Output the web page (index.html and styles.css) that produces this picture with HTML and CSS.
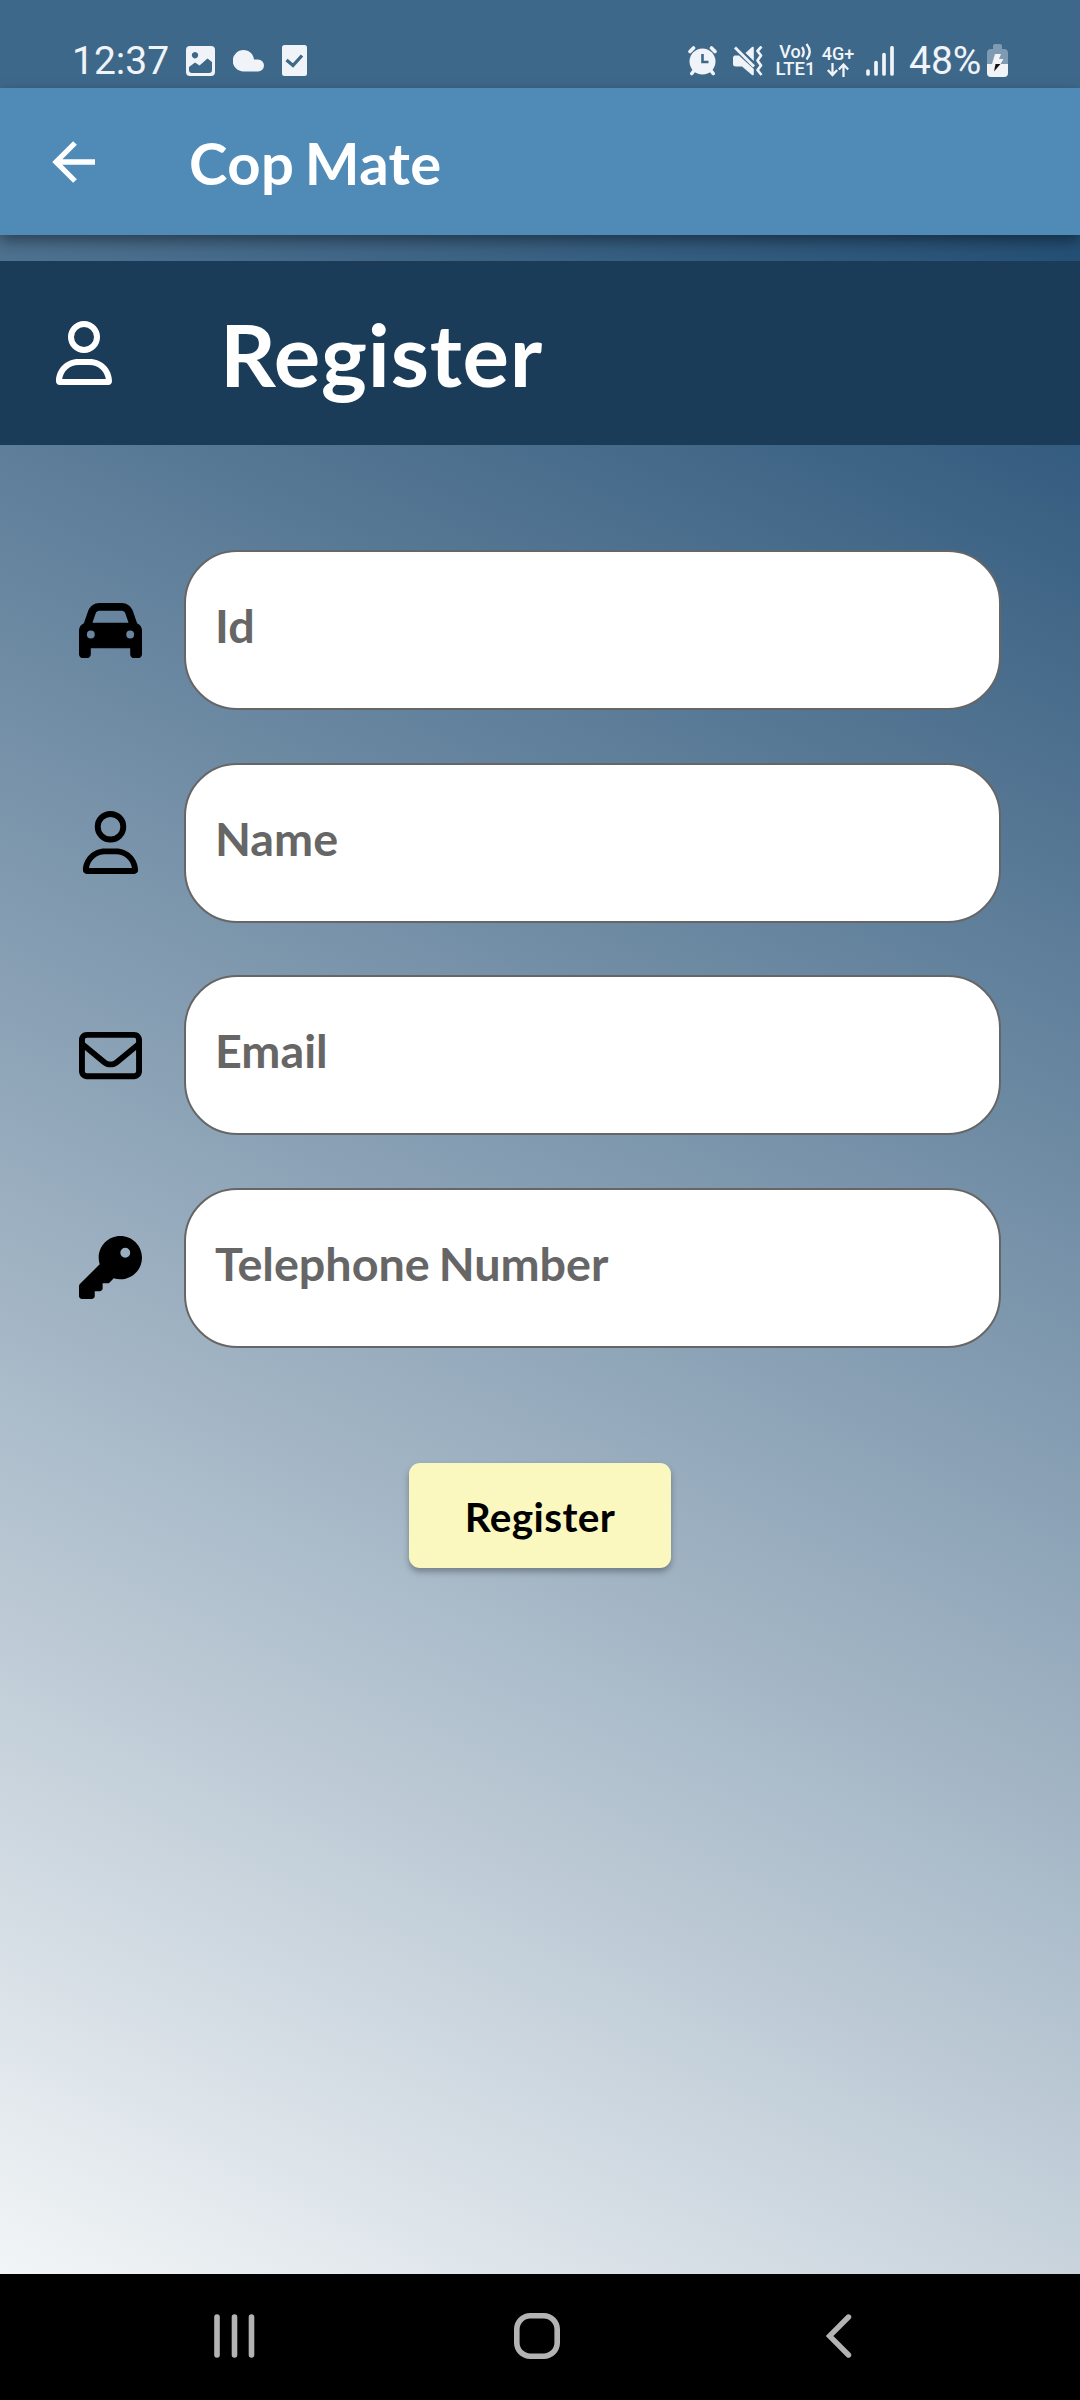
FILE: index.html
```html
<!DOCTYPE html>
<html lang="en">
<head>
<meta charset="utf-8">
<title>Cop Mate</title>
<link rel="stylesheet" href="styles.css">
</head>
<body>
<div class="screen">
  <div class="status-bar">
    <div class="status-left">
      <span class="clock">12:37</span>
      <svg class="photo" width="29" height="30" viewBox="0 0 29 30"><path fill="currentColor" fill-rule="evenodd" d="M4 0H25Q29 0 29 4V26Q29 30 25 30H4Q0 30 0 26V4Q0 0 4 0ZM3 21V24Q3 27 6 27H23Q26 27 26 24V16L21.500 12.500L13.500 19.500L9 16.500ZM9 6A3.200 3.200 0 1 0 9.010 6Z"/></svg>
      <svg class="cloud" width="31" height="22" viewBox="0 0 31 22"><path fill="currentColor" d="M10.500 0C16 0 20.500 4 21 9.500H25A5.900 5.900 0 0 1 25 21.500H10.500A10.700 10.700 0 0 1 10.500 0Z"/></svg>
      <svg class="task" width="25" height="31" viewBox="0 0 25 31"><rect width="25" height="31" rx="2.500" fill="currentColor"/><path d="M4.500 15L11 20.500L20 10.500" fill="none" stroke="#3e688a" stroke-width="3.300"/></svg>
    </div>
    <div class="status-right">
      <svg class="alarm" width="29" height="30" viewBox="0 0 29 30"><g fill="none" stroke="currentColor" stroke-width="3.600" stroke-linecap="round"><path d="M2 5.500L5.500 2M27 5.500L23.500 2M6.500 24L3.800 27.500M22.500 24L25.200 27.500"/></g><circle cx="14.500" cy="15.500" r="13" fill="currentColor"/><path d="M14.500 8V16H20.500" fill="none" stroke="#3e688a" stroke-width="2.600"/></svg>
      <svg class="mute" width="30" height="30" viewBox="0 0 30 30"><path fill="currentColor" d="M12.500 7L19 1Q20.800 0 20.800 2V15ZM1.500 9.500H6L20.800 23V28Q20.800 30 19 29L9 20.500H3Q0 20.500 0 18V11Z"/><path d="M2 1.500L21 20.500" stroke="currentColor" stroke-width="2.800"/><path d="M28.500 .5L24.500 5L28 9.500L24.500 14.500L28 19.500L24.500 24L28.500 29" fill="none" stroke="currentColor" stroke-width="2.700" stroke-linejoin="round"/></svg>
      <div class="volte">
        <span class="vo">Vo<svg width="11" height="18" viewBox="0 0 11 18"><path d="M1 4Q4.500 9 1 14M5.500 1Q12 9 5.500 16.500" fill="none" stroke="currentColor" stroke-width="2.300"/></svg></span>
        <span class="lte">LTE1</span>
      </div>
      <div class="network">
        <span class="gen">4G+</span>
        <svg width="22" height="14" viewBox="0 0 22 14"><path d="M5.500 0V12M.8 7L5.500 12L10.200 7M16.500 14V1.500M11.800 6.500L16.500 1.500L21.200 6.500" fill="none" stroke="currentColor" stroke-width="2.300"/></svg>
      </div>
      <svg class="signal" width="28" height="30" viewBox="0 0 28 30"><path d="M2 25V28M10 16.500V28M18 8.500V28M26 1.800V28" stroke="currentColor" stroke-width="3.700" stroke-linecap="round"/></svg>
      <span class="percent">48%</span>
      <svg class="battery" width="21" height="33" viewBox="0 0 21 33"><path fill="#7f9bb1" d="M6 5V2Q6 0 8 0H13Q15 0 15 2V5H17Q21 5 21 9V20H0V9Q0 5 4 5Z"/><path fill="currentColor" d="M0 20H21V29Q21 33 17 33H4Q0 33 0 29Z"/><path fill="currentColor" d="M8 10H14L12 15H16.500L13.500 20H5Z"/><path fill="#111" d="M8.500 20H13.500L7 27.500Z"/></svg>
    </div>
  </div>

  <header class="app-bar">
    <svg class="back" width="43" height="42" viewBox="0 0 43 42"><path d="M23 2L4 21L23 40M3.500 21H43" fill="none" stroke="currentColor" stroke-width="5.300"/></svg>
    <h1 class="app-title">Cop Mate</h1>
  </header>

  <main class="content">
    <div class="banner">
      <svg class="banner-icon" width="56" height="64" viewBox="0 0 448 512"><path fill="currentColor" d="M304 128a80 80 0 1 0 -160 0 80 80 0 1 0 160 0zM96 128a128 128 0 1 1 256 0A128 128 0 1 1 96 128zM49.300 464H398.700c-8.900-63.300-63.300-112-129-112H178.300c-65.700 0-120.100 48.700-129 112zM0 482.300C0 383.800 79.800 304 178.300 304h91.400C368.200 304 448 383.800 448 482.300c0 16.400-13.300 29.700-29.700 29.700H29.700C13.300 512 0 498.700 0 482.300z"/></svg>
      <h2 class="banner-title">Register</h2>
    </div>
    <form class="form">
      <label class="row">
        <svg class="icon" viewBox="0 0 512 512"><path d="M135.200 117.400L109.100 192H402.900l-26.100-74.600C372.300 104.600 360.200 96 346.600 96H165.400c-13.600 0-25.700 8.600-30.200 21.400zM39.600 196.800L74.800 96.300C88.300 57.800 124.600 32 165.400 32H346.600c40.800 0 77.100 25.800 90.600 64.300l35.200 100.500c23.200 9.600 39.600 32.500 39.600 59.200V400v48c0 17.700-14.300 32-32 32H448c-17.700 0-32-14.300-32-32V400H96v48c0 17.700-14.300 32-32 32H32c-17.700 0-32-14.300-32-32V400 256c0-26.700 16.400-49.600 39.600-59.200zM128 288a32 32 0 1 0 -64 0 32 32 0 1 0 64 0zm288 32a32 32 0 1 0 0-64 32 32 0 1 0 0 64z"/></svg>
        <span class="field">Id</span>
      </label>
      <label class="row">
        <svg class="icon" viewBox="-32 0 512 512"><path d="M304 128a80 80 0 1 0 -160 0 80 80 0 1 0 160 0zM96 128a128 128 0 1 1 256 0A128 128 0 1 1 96 128zM49.300 464H398.700c-8.900-63.300-63.300-112-129-112H178.300c-65.700 0-120.100 48.700-129 112zM0 482.300C0 383.800 79.800 304 178.300 304h91.400C368.200 304 448 383.800 448 482.300c0 16.400-13.300 29.700-29.700 29.700H29.700C13.300 512 0 498.700 0 482.300z"/></svg>
        <span class="field">Name</span>
      </label>
      <label class="row">
        <svg class="icon" viewBox="0 0 512 512"><path d="M64 112c-8.800 0-16 7.200-16 16v22.100L220.500 291.700c20.700 17 50.400 17 71.100 0L464 150.100V128c0-8.800-7.200-16-16-16H64zM48 212.200V384c0 8.800 7.200 16 16 16H448c8.800 0 16-7.200 16-16V212.200L322 328.800c-38.400 31.500-93.700 31.500-132 0L48 212.200zM0 128C0 92.700 28.700 64 64 64H448c35.300 0 64 28.700 64 64V384c0 35.300-28.700 64-64 64H64c-35.300 0-64-28.700-64-64V128z"/></svg>
        <span class="field">Email</span>
      </label>
      <label class="row">
        <svg class="icon" viewBox="0 0 512 512"><path d="M336 352c97.200 0 176-78.800 176-176S433.200 0 336 0S160 78.800 160 176c0 18.700 2.900 36.800 8.300 53.700L7 391c-4.500 4.500-7 10.600-7 17v80c0 13.300 10.700 24 24 24h80c13.300 0 24-10.700 24-24V448h40c13.300 0 24-10.700 24-24V384h40c6.400 0 12.500-2.500 17-7l33.300-33.300c16.900 5.400 35 8.300 53.700 8.300zM376 96a40 40 0 1 1 0 80 40 40 0 1 1 0-80z"/></svg>
        <span class="field">Telephone Number</span>
      </label>
      <button class="submit" type="button">Register</button>
    </form>
  </main>

  <nav class="nav-bar">
    <svg width="42" height="44" viewBox="0 0 42 44"><path d="M3 3V41M20.500 3V41M37.500 3V41" stroke="currentColor" stroke-width="5.600" stroke-linecap="round"/></svg>
    <svg class="home" width="46" height="46" viewBox="0 0 46 46"><rect x="2.800" y="2.800" width="40.400" height="40.400" rx="13.500" fill="none" stroke="currentColor" stroke-width="5.600"/></svg>
    <svg width="26" height="44" viewBox="0 0 26 44"><path d="M22.500 3L3.500 22L22.500 41" fill="none" stroke="currentColor" stroke-width="5.400" stroke-linecap="round"/></svg>
  </nav>
</div>
</body>
</html>
```

FILE: styles.css
```css
* { box-sizing: border-box; }
body { margin: 0; }
svg { display: block; flex: none; }

.screen {
  display: flex;
  flex-direction: column;
  width: 1080px;
  height: 2400px;
  overflow: hidden;
  background: linear-gradient(205.400deg, #103f68, #f2f5f7) 0 0 / 1080px 2274px no-repeat;
  font-family: "Lato", "Open Sans", sans-serif;
}

.status-bar {
  display: flex;
  justify-content: space-between;
  height: 88px;
  padding: 32px 72px 0 72px;
  background: #3e688a;
  color: #f0f4f8;
  font-family: "Roboto", sans-serif;
}
.status-left, .status-right { display: flex; align-items: center; height: 57px; }
.clock, .percent { font-size: 39px; line-height: 56px; white-space: nowrap; }
.clock { width: 98px; margin-right: 16px; }
.photo { margin-right: 18px; }
.cloud { margin-right: 18px; }
.alarm { margin-right: 16px; }
.mute { margin-right: 13px; }
.volte { width: 39px; margin-right: 7px; }
.network { width: 32px; margin-right: 12px; }
.volte, .network { display: flex; flex-direction: column; align-items: center; font-weight: 500; }
.vo { display: flex; font-size: 18px; line-height: 17px; }
.lte { font-size: 18.500px; line-height: 17px; }
.gen { font-size: 18px; line-height: 18px; }
.signal { margin-right: 15px; }
.percent { width: 73px; margin-right: 5px; }

.app-bar {
  display: flex;
  align-items: center;
  position: relative;
  z-index: 1;
  height: 147px;
  padding-left: 52px;
  background: #508bb8;
  color: #fff;
  box-shadow: 0 6px 14px rgba(0, 0, 0, .42);
}
.app-title {
  margin: 2px 0 0 94px;
  font-size: 58px;
  font-weight: 700;
  line-height: 70px;
  letter-spacing: .4px;
  word-spacing: -4px;
}

.content {
  flex: 1;
  padding-top: 26px;
}
.banner {
  display: flex;
  align-items: center;
  height: 184px;
  padding-left: 56px;
  background: #1b3c58;
  color: #fff;
}
.banner-title {
  margin: 1px 0 0 108px;
  font-size: 87px;
  font-weight: 700;
  line-height: 100px;
  letter-spacing: .8px;
}

.form {
  display: flex;
  flex-direction: column;
  gap: 52.500px;
  padding: 105px 79px 0 79px;
}
.row { display: flex; align-items: center; gap: 42px; }
.icon { width: 63px; height: 63px; }
.field {
  flex: 1;
  height: 160px;
  padding: 0 29px 8px;
  border: 2.600px solid #666;
  border-radius: 53px;
  background: #fff;
  color: #666;
  font-size: 46.700px;
  font-weight: 700;
  line-height: 147px;
  word-spacing: -2.500px;
}
.submit {
  align-self: center;
  width: 262px;
  height: 105px;
  margin-top: 63px;
  padding: 1px 0 0 0;
  border: 0;
  border-radius: 11px;
  background: #faf7bf;
  color: #000;
  font: 700 40.500px "Lato", sans-serif;
  letter-spacing: .4px;
  box-shadow: 0 4px 6px rgba(0, 0, 0, .3);
}

.nav-bar {
  display: flex;
  justify-content: space-between;
  align-items: center;
  height: 126px;
  padding: 0 228px 2px 214px;
  background: #000;
  color: #b3b3b3;
}
.home { margin-right: 8px; }
```
